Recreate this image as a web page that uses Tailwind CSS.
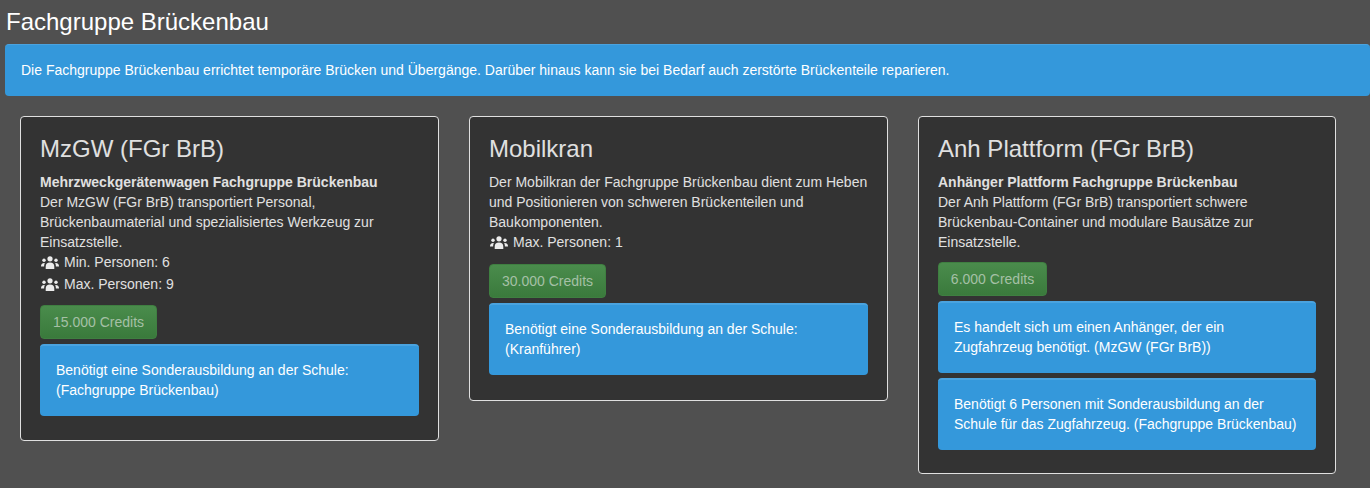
<!doctype html>
<html lang="en">
  <head>
    <meta charset="UTF-8" />
    <meta name="viewport" content="width=device-width, initial-scale=1.0" />
    <title>Fachgruppe Brückenbau</title>
    <script src="https://cdn.jsdelivr.net/npm/@tailwindcss/browser@4"></script>
  </head>
  <body class="bg-[#505050] text-[#e0e0e0] font-['Liberation_Sans',Arial,sans-serif] text-[14px] leading-[20px] overflow-hidden h-[488px]">
    <!-- Header -->
    <h1 class="text-[24px] leading-[26px] text-white pl-[6px] pt-[9px] mb-[9px]">Fachgruppe Brückenbau</h1>

    <div class="ml-[5px] h-[52px] rounded-[4px] bg-[#3498db] border-t border-[#4aa3df] px-4 pt-[15px] text-white">
      Die Fachgruppe Brückenbau errichtet temporäre Brücken und Übergänge. Darüber hinaus kann sie bei Bedarf auch zerstörte Brückenteile reparieren.
    </div>

    <!-- Vehicle cards -->
    <div class="flex items-start gap-[30px] pl-[20px] mt-[20px]">
      <div class="w-[419px] h-[325px] bg-[#333333] border border-[#e0e0e0] rounded-[4px] pt-[19px] px-[19px]">
        <h3 class="text-[24px] leading-[26px] mb-[10px]">MzGW (FGr BrB)</h3>
        <p>
          <b class="block font-bold">Mehrzweckgerätenwagen Fachgruppe Brückenbau</b>
          Der MzGW (FGr BrB) transportiert Personal, Brückenbaumaterial und spezialisiertes Werkzeug zur Einsatzstelle.
        </p>
        <div class="flex items-center gap-[5px] h-[20px]">
          <svg class="ml-px w-[18px] h-[13px] fill-[#ececec]" viewBox="0 0 18 13"><circle cx="9" cy="2.800" r="2.600"/><circle cx="3" cy="4.200" r="1.700"/><circle cx="15" cy="4.200" r="1.700"/><path d="M4.700 13v-2.300C4.700 8 6.200 6.600 9 6.600s4.300 1.400 4.300 4.100V13zM0 10.500C0 8 1 6.800 3.800 6.900 3.300 7.900 3.100 9.200 3.100 10.500zM18 10.500c0-2.500-1-3.700-3.800-3.600.5 1 .7 2.300.7 3.600z"/></svg>
          <span>Min. Personen: 6</span>
        </div>
        <div class="flex items-center gap-[5px] h-[20px] mt-[2px]">
          <svg class="ml-px w-[18px] h-[13px] fill-[#ececec]" viewBox="0 0 18 13"><circle cx="9" cy="2.800" r="2.600"/><circle cx="3" cy="4.200" r="1.700"/><circle cx="15" cy="4.200" r="1.700"/><path d="M4.700 13v-2.300C4.700 8 6.200 6.600 9 6.600s4.300 1.400 4.300 4.100V13zM0 10.500C0 8 1 6.800 3.800 6.900 3.300 7.900 3.100 9.200 3.100 10.500zM18 10.500c0-2.500-1-3.700-3.800-3.600.5 1 .7 2.300.7 3.600z"/></svg>
          <span>Max. Personen: 9</span>
        </div>
        <button class="block mt-[11px] h-[34px] w-[117px] rounded-[4px] bg-linear-to-b from-[#4a8c4c] to-[#3a7a3c] border border-[#3f7f41] text-[#a5c0a6]">15.000 Credits</button>
        <div class="mt-[5px] h-[72px] rounded-[4px] bg-[#3498db] border-t-2 border-[#4aa3df] px-4 pt-[14px] text-white">
          Benötigt eine Sonderausbildung an der Schule: (Fachgruppe Brückenbau)
        </div>
      </div>

      <div class="w-[419px] h-[285px] bg-[#333333] border border-[#e0e0e0] rounded-[4px] pt-[19px] px-[19px]">
        <h3 class="text-[24px] leading-[26px] mb-[10px]">Mobilkran</h3>
        <p>
          Der Mobilkran der Fachgruppe Brückenbau dient zum Heben und Positionieren von schweren Brückenteilen und Baukomponenten.
        </p>
        <div class="flex items-center gap-[5px] h-[20px]">
          <svg class="ml-px w-[18px] h-[13px] fill-[#ececec]" viewBox="0 0 18 13"><circle cx="9" cy="2.800" r="2.600"/><circle cx="3" cy="4.200" r="1.700"/><circle cx="15" cy="4.200" r="1.700"/><path d="M4.700 13v-2.300C4.700 8 6.200 6.600 9 6.600s4.300 1.400 4.300 4.100V13zM0 10.500C0 8 1 6.800 3.800 6.900 3.300 7.900 3.100 9.200 3.100 10.500zM18 10.500c0-2.500-1-3.700-3.800-3.600.5 1 .7 2.300.7 3.600z"/></svg>
          <span>Max. Personen: 1</span>
        </div>
        <button class="block mt-[12px] h-[34px] w-[117px] rounded-[4px] bg-linear-to-b from-[#4a8c4c] to-[#3a7a3c] border border-[#3f7f41] text-[#a5c0a6]">30.000 Credits</button>
        <div class="mt-[5px] h-[72px] rounded-[4px] bg-[#3498db] border-t-2 border-[#4aa3df] px-4 pt-[14px] text-white">
          Benötigt eine Sonderausbildung an der Schule: (Kranführer)
        </div>
      </div>

      <div class="w-[418px] h-[358px] bg-[#333333] border border-[#e0e0e0] rounded-[4px] pt-[19px] px-[19px]">
        <h3 class="text-[24px] leading-[26px] mb-[10px]">Anh Plattform (FGr BrB)</h3>
        <p>
          <b class="block font-bold">Anhänger Plattform Fachgruppe Brückenbau</b>
          Der Anh Plattform (FGr BrB) transportiert schwere Brückenbau-Container und modulare Bausätze zur Einsatzstelle.
        </p>
        <button class="block mt-[10px] h-[34px] w-[109px] rounded-[4px] bg-linear-to-b from-[#4a8c4c] to-[#3a7a3c] border border-[#3f7f41] text-[#a5c0a6]">6.000 Credits</button>
        <div class="mt-[5px] h-[72px] rounded-[4px] bg-[#3498db] border-t-2 border-[#4aa3df] px-4 pt-[14px] text-white">
          Es handelt sich um einen Anhänger, der ein Zugfahrzeug benötigt. (MzGW (FGr BrB))
        </div>
        <div class="mt-[5px] h-[72px] rounded-[4px] bg-[#3498db] border-t-2 border-[#4aa3df] px-4 pt-[14px] text-white">
          Benötigt 6 Personen mit Sonderausbildung an der Schule für das Zugfahrzeug. (Fachgruppe Brückenbau)
        </div>
      </div>
    </div>
  </body>
</html>
